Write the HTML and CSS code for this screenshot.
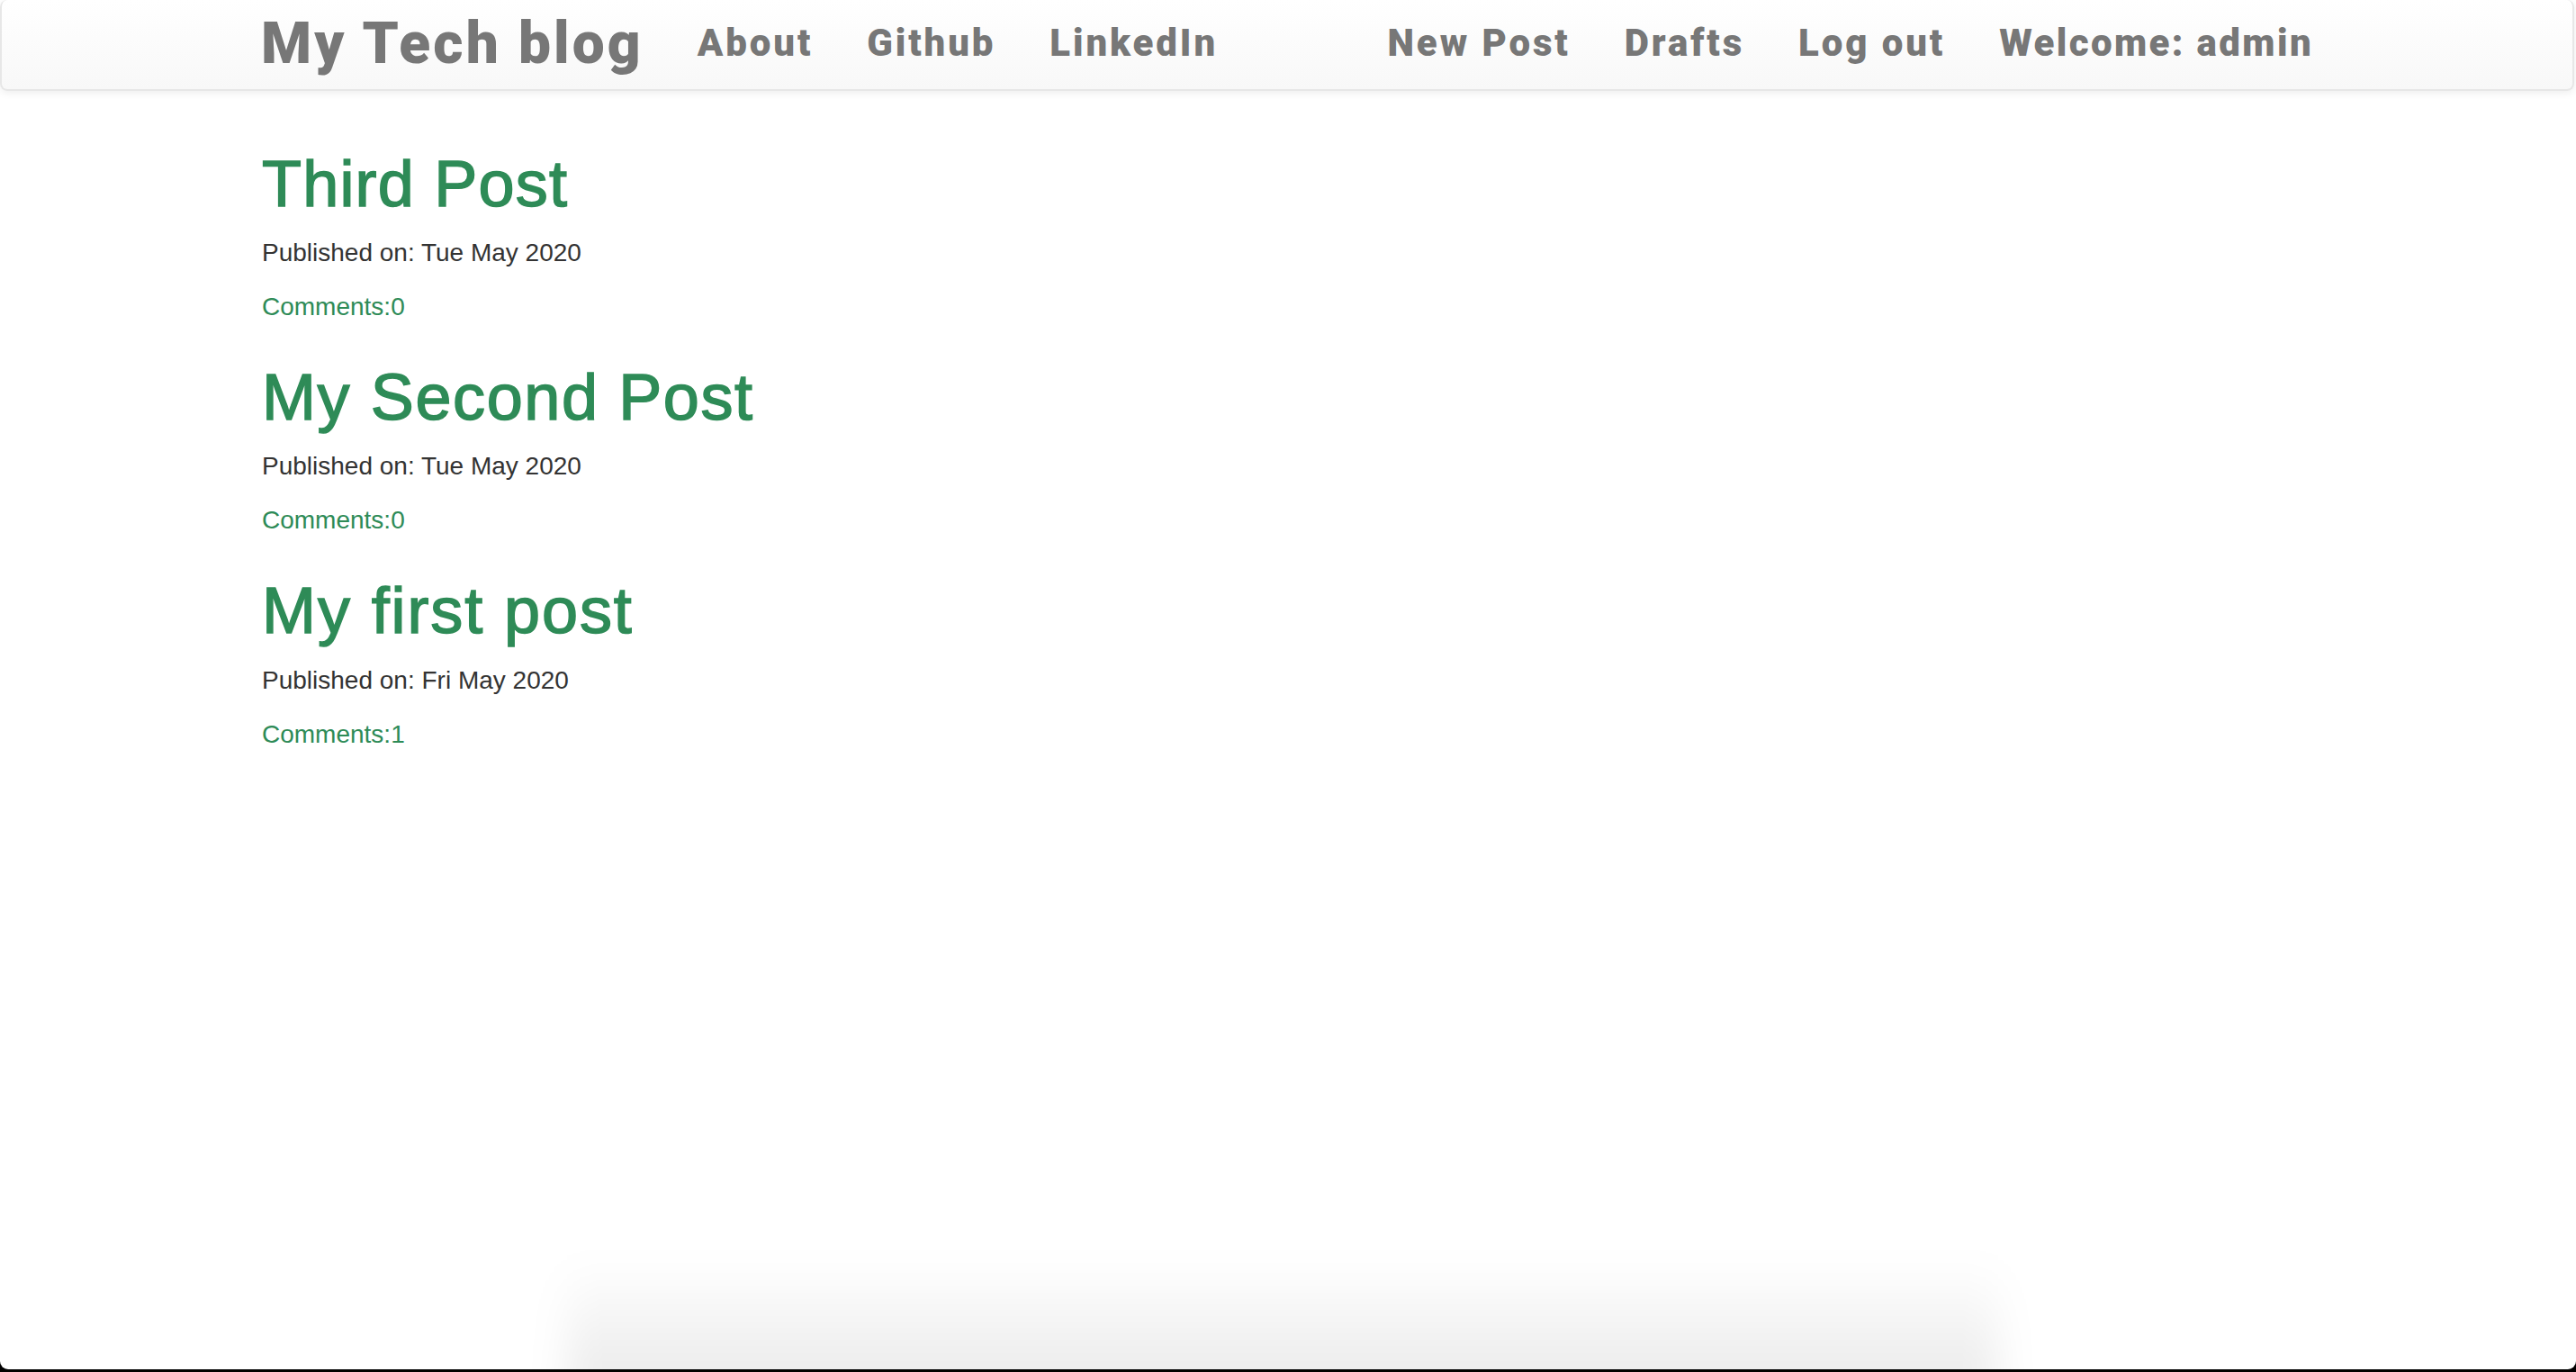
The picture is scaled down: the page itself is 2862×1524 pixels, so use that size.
FILE: index.html
```html
<!DOCTYPE html>
<html lang="en">
<head>
<meta charset="utf-8">
<title>My Tech blog</title>
<link rel="stylesheet" href="styles.css">
</head>
<body>
<div class="window">
  <nav class="navbar">
    <div class="container nav-inner">
      <a class="brand" href="#">My Tech blog</a>
      <ul class="nav">
        <li><a href="#">About</a></li>
        <li><a href="#">Github</a></li>
        <li><a href="#">LinkedIn</a></li>
      </ul>
      <ul class="nav nav-right">
        <li><a href="#">New Post</a></li>
        <li><a href="#">Drafts</a></li>
        <li><a href="#">Log out</a></li>
        <li><a class="welcome" href="#">Welcome: admin</a></li>
      </ul>
    </div>
  </nav>

  <main class="container posts">
    <article class="post">
      <h1 class="post-title t1"><a href="#">Third Post</a></h1>
      <p class="post-date">Published on: Tue May 2020</p>
      <p class="post-comments"><a href="#">Comments:0</a></p>
    </article>
    <article class="post">
      <h1 class="post-title t2"><a href="#">My Second Post</a></h1>
      <p class="post-date">Published on: Tue May 2020</p>
      <p class="post-comments"><a href="#">Comments:0</a></p>
    </article>
    <article class="post">
      <h1 class="post-title t3"><a href="#">My first post</a></h1>
      <p class="post-date">Published on: Fri May 2020</p>
      <p class="post-comments"><a href="#">Comments:1</a></p>
    </article>
  </main>

  <div class="dock-shadow"></div>
</div>
</body>
</html>
```
FILE: styles.css
```css
* {
  box-sizing: border-box;
}

html {
  background: #000;
}

body {
  margin: 0;
  font-family: "Liberation Sans", Arial, sans-serif;
  font-size: 28px;
  line-height: 40px;
  color: #333;
}

.window {
  position: relative;
  height: 1521px;
  background: #fff;
  border-radius: 0 0 9px 9px;
  overflow: hidden;
}

.container {
  width: 2340px;
  margin: 0 auto;
  padding: 0 30px;
}

/* Navbar */
.navbar {
  height: 101px;
  margin-right: 2px;
  background: linear-gradient(to bottom, #ffffff 0%, #f8f8f8 100%);
  border: 2px solid #e7e7e7;
  border-top: 0;
  border-radius: 8px;
  box-shadow: 0 2px 10px rgba(0, 0, 0, 0.075);
}

.nav-inner {
  display: flex;
  align-items: flex-start;
  height: 99px;
}

.brand {
  display: block;
  padding-right: 30px;
  font-family: Roboto, "Liberation Sans", sans-serif;
  font-weight: 900;
  font-size: 64px;
  line-height: 98px;
  letter-spacing: 3.1px;
  color: #777;
  text-decoration: none;
}

.nav {
  display: flex;
  list-style: none;
  margin: 0;
  padding: 0;
}

.nav a {
  display: block;
  padding: 28px 30px 31px;
  font-family: Roboto, "Liberation Sans", sans-serif;
  font-weight: 900;
  font-size: 42px;
  line-height: 40px;
  letter-spacing: 2.9px;
  color: #777;
  text-decoration: none;
}

.nav a.welcome {
  letter-spacing: 2.4px;
}

.nav-right {
  margin-left: auto;
  margin-right: -30px;
}

/* Posts */
.posts {
  padding-top: 23px;
}

.post-title {
  margin: 41px 0 17px;
  font-size: 72px;
  line-height: 79.2px;
  font-weight: 500;
  -webkit-text-stroke: 1.5px #2e8b57;
}

.post-title a {
  color: #2e8b57;
  text-decoration: none;
}

.t1 { letter-spacing: 1.2px; }
.t2 { letter-spacing: 1.6px; }
.t3 { letter-spacing: 1.9px; }

.post-date {
  margin: 0 0 20px;
}

.post-comments {
  margin: 0 0 20px;
}

.post-comments a {
  color: #2e8b57;
  text-decoration: none;
}

/* faint shadow cast near the bottom edge */
.dock-shadow {
  position: absolute;
  left: 630px;
  width: 1590px;
  bottom: -40px;
  height: 160px;
  background: linear-gradient(to bottom, rgba(0, 0, 0, 0) 0%, rgba(0, 0, 0, 0.07) 72%, rgba(0, 0, 0, 0.08) 100%);
  filter: blur(22px);
  pointer-events: none;
}
```
